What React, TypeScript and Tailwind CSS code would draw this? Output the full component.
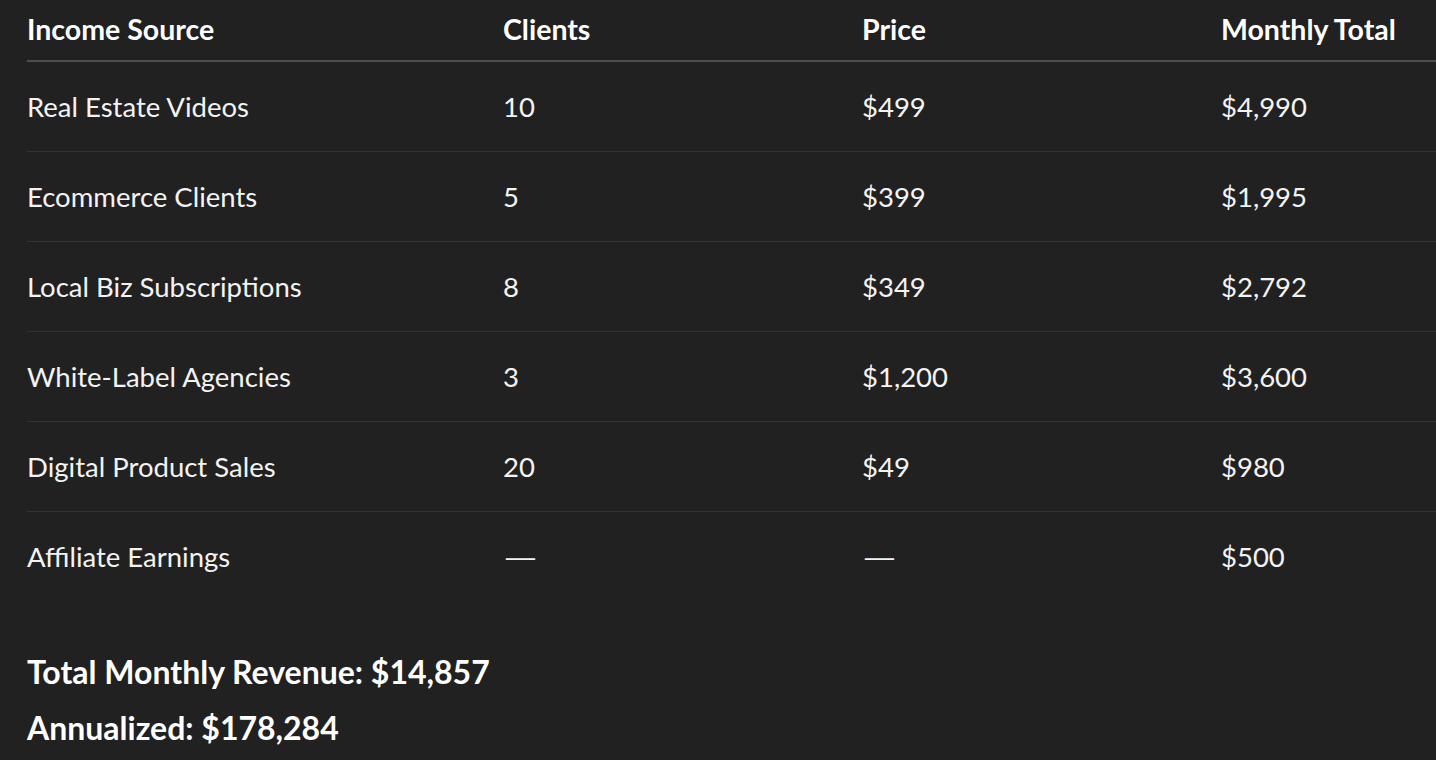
const rows = [
  { source: 'Real Estate Videos', clients: '10', price: '$499', total: '$4,990' },
  { source: 'Ecommerce Clients', clients: '5', price: '$399', total: '$1,995' },
  { source: 'Local Biz Subscriptions', clients: '8', price: '$349', total: '$2,792' },
  { source: 'White-Label Agencies', clients: '3', price: '$1,200', total: '$3,600' },
  { source: 'Digital Product Sales', clients: '20', price: '$49', total: '$980' },
  { source: 'Affiliate Earnings', clients: '—', price: '—', total: '$500' },
];

function Cell({ value }: { value: string }) {
  if (value === '—') {
    return (
      <div>
        <span className="inline-block origin-left scale-x-[1.6]">—</span>
      </div>
    );
  }
  return <div>{value}</div>;
}

export default function App() {
  return (
    <div className="min-h-screen bg-[#212121] pl-[27px] text-[#f3f3f3] font-['Lato','Noto_Sans',sans-serif] overflow-hidden">
      <div className="grid grid-cols-[476px_359px_359px_1fr] h-[62px] items-center border-b-2 border-[#4d4d4d] pb-[2px] text-[28.5px] font-bold text-white">
        <div>Income Source</div>
        <div>Clients</div>
        <div>Price</div>
        <div>Monthly Total</div>
      </div>
      {rows.map((r, i) => (
        <div
          key={r.source}
          className={
            i < rows.length - 1
              ? 'grid grid-cols-[476px_359px_359px_1fr] h-[90px] items-center border-b border-[#333333] text-[27.5px]'
              : 'grid grid-cols-[476px_359px_359px_1fr] h-[90px] items-center text-[27.5px]'
          }
        >
          <div>{r.source}</div>
          <Cell value={r.clients} />
          <Cell value={r.price} />
          <div>{r.total}</div>
        </div>
      ))}
      <div className="pt-[42px] text-[32px] font-bold text-white leading-[56px]">
        <p>Total Monthly Revenue: $14,857</p>
        <p>Annualized: $178,284</p>
      </div>
    </div>
  );
}
